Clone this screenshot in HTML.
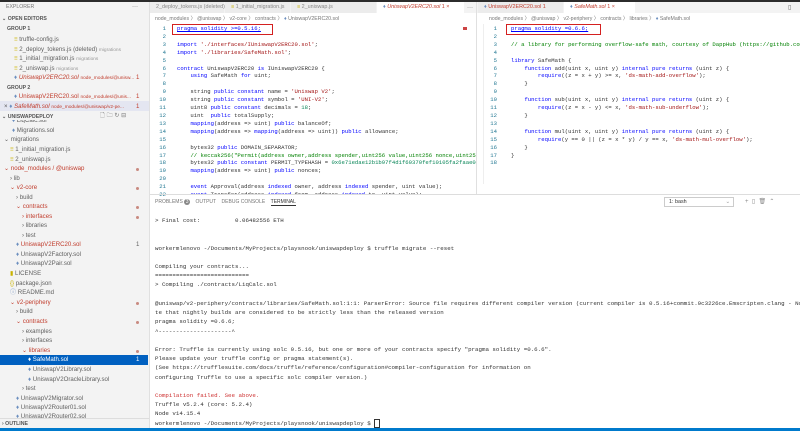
<!DOCTYPE html>
<html><head><meta charset="utf-8"><style>
*{margin:0;padding:0;box-sizing:border-box}
body{width:800px;height:431px;overflow:hidden;background:#fff;font-family:"Liberation Sans",sans-serif;position:relative;color:#616161}
.a{position:absolute;white-space:pre}
#top{left:0;top:0;width:800px;height:2px;background:#2c2c2c}
#side{left:0;top:2px;width:150px;height:426px;background:#f3f3f3}
.s{position:absolute;white-space:pre;font-size:6.1px;color:#616161;line-height:8px}
.r{color:#c13c2c}
.h{font-weight:bold;font-size:5.2px;color:#555}
.dot{position:absolute;left:136px;width:3px;height:3px;border-radius:50%;background:#c88a80}
.ic{color:#6c8fbf}
.mono{font-family:"Liberation Mono",monospace}
.code{font-size:5.6px;line-height:7.9px;color:#333}
.k{color:#0000ff}.st{color:#a31515}.c{color:#008000}.n{color:#098658}
.ln{color:#237893;text-align:right;width:14px}
.term{font-size:5.8px;line-height:9.2px;color:#333}
.tab{position:absolute;top:2px;height:11px;font-size:5.4px;line-height:11px;padding-left:6px;white-space:pre;color:#888;background:#ececec;border-right:1px solid #f3f3f3}
</style></head><body>
<div class="a" id="top"></div>
<div class="a" id="side"></div>
<!-- sidebar -->
<div class="s" style="left:6px;top:3px;font-size:5.2px;color:#777">EXPLORER</div>
<div class="s" style="left:132px;top:3px">···</div>
<div class="s h" style="left:2px;top:15px">⌄ OPEN EDITORS</div>
<div class="s h" style="left:7px;top:25px">GROUP 1</div>
<div class="s" style="left:14px;top:36px"><span style="color:#c9b200">≡</span> truffle-config.js</div>
<div class="s" style="left:14px;top:46px"><span style="color:#c9b200">≡</span> 2_deploy_tokens.js (deleted) <span style="color:#999;font-size:4.8px">migrations</span></div>
<div class="s" style="left:14px;top:55px"><span style="color:#c9b200">≡</span> 1_initial_migration.js <span style="color:#999;font-size:4.8px">migrations</span></div>
<div class="s" style="left:14px;top:65px"><span style="color:#c9b200">≡</span> 2_uniswap.js <span style="color:#999;font-size:4.8px">migrations</span></div>
<div class="s r" style="left:14px;top:74px"><span class="ic">♦</span> <i>UniswapV2ERC20.sol</i> <span style="font-size:4.8px">node_modules/@unisw...</span></div><div class="s r" style="left:136px;top:74px">1</div>
<div class="s h" style="left:7px;top:84px">GROUP 2</div>
<div class="s r" style="left:14px;top:93px"><span class="ic">♦</span> UniswapV2ERC20.sol <span style="font-size:4.8px">node_modules/@unis...</span></div><div class="s r" style="left:136px;top:93px">1</div>
<div class="a" style="left:0;top:101px;width:150px;height:10px;background:#e4e6f1"></div>
<div class="s r" style="left:4px;top:103px"><span style="color:#555">×</span> <span class="ic">♦</span> <i>SafeMath.sol</i> <span style="font-size:4.8px">node_modules/@uniswap/v2-pe...</span></div><div class="s r" style="left:136px;top:103px">1</div>
<div class="s h" style="left:2px;top:113px">⌄ UNISWAPDEPLOY</div>
<div class="s" style="left:100px;top:112px;color:#777">🗋 🗀 ↻ ⊟</div>
<div class="s" style="left:12px;top:120px;height:3px;overflow:hidden;line-height:2px"><span class="ic">♦</span> LiqCalc.sol</div>
<div class="s" style="left:12px;top:127px"><span class="ic">♦</span> Migrations.sol</div>
<div class="s" style="left:4px;top:136px">⌄ migrations</div>
<div class="s" style="left:10px;top:146px"><span style="color:#c9b200">≡</span> 1_initial_migration.js</div>
<div class="s" style="left:10px;top:156px"><span style="color:#c9b200">≡</span> 2_uniswap.js</div>
<div class="s r" style="left:4px;top:165px">⌄ node_modules / @uniswap</div><div class="dot" style="top:168px"></div>
<div class="s" style="left:10px;top:175px">› lib</div>
<div class="s r" style="left:10px;top:184px">⌄ v2-core</div><div class="dot" style="top:187px"></div>
<div class="s" style="left:16px;top:194px">› build</div>
<div class="s r" style="left:16px;top:203px">⌄ contracts</div><div class="dot" style="top:206px"></div>
<div class="s r" style="left:22px;top:213px">› interfaces</div><div class="dot" style="top:216px"></div>
<div class="s" style="left:22px;top:222px">› libraries</div>
<div class="s" style="left:22px;top:232px">› test</div>
<div class="s r" style="left:16px;top:241px"><span class="ic">♦</span> UniswapV2ERC20.sol</div><div class="s" style="left:136px;top:241px">1</div>
<div class="s" style="left:16px;top:251px"><span class="ic">♦</span> UniswapV2Factory.sol</div>
<div class="s" style="left:16px;top:260px"><span class="ic">♦</span> UniswapV2Pair.sol</div>
<div class="s" style="left:10px;top:270px"><span style="color:#c9b200">▮</span> LICENSE</div>
<div class="s" style="left:10px;top:280px"><span style="color:#c9b200">{}</span> package.json</div>
<div class="s" style="left:10px;top:289px"><span class="ic">ⓘ</span> README.md</div>
<div class="s r" style="left:10px;top:299px">⌄ v2-periphery</div><div class="dot" style="top:302px"></div>
<div class="s" style="left:16px;top:308px">› build</div>
<div class="s r" style="left:16px;top:318px">⌄ contracts</div><div class="dot" style="top:321px"></div>
<div class="s" style="left:22px;top:328px">› examples</div>
<div class="s" style="left:22px;top:337px">› interfaces</div>
<div class="s r" style="left:22px;top:347px">⌄ libraries</div><div class="dot" style="top:350px"></div>
<div class="a" style="left:0;top:355px;width:148px;height:10px;background:#0060c0"></div>
<div class="s" style="left:28px;top:356px;color:#fff"><span>♦</span> SafeMath.sol</div><div class="s" style="left:136px;top:356px;color:#fff">1</div>
<div class="s" style="left:28px;top:366px"><span class="ic">♦</span> UniswapV2Library.sol</div>
<div class="s" style="left:28px;top:376px"><span class="ic">♦</span> UniswapV2OracleLibrary.sol</div>
<div class="s" style="left:22px;top:385px">› test</div>
<div class="s" style="left:16px;top:395px"><span class="ic">♦</span> UniswapV2Migrator.sol</div>
<div class="s" style="left:16px;top:404px"><span class="ic">♦</span> UniswapV2Router01.sol</div>
<div class="s" style="left:16px;top:413px;height:5px;overflow:hidden"><span class="ic">♦</span> UniswapV2Router02.sol</div>
<div class="a" style="left:0;top:418px;width:150px;height:1px;background:#ddd"></div>
<div class="s h" style="left:2px;top:420px">› OUTLINE</div>
<div class="a" style="left:149px;top:2px;width:1px;height:426px;background:#e0e0e0"></div>

<!-- tab bars -->
<div class="a" style="left:150px;top:2px;width:650px;height:11px;background:#f3f3f3"></div>
<div class="tab" style="left:150px;width:75px">2_deploy_tokens.js (deleted)</div>
<div class="tab" style="left:225px;width:66px"><span style="color:#c9b200">≡</span> 1_initial_migration.js</div>
<div class="tab" style="left:291px;width:86px"><span style="color:#c9b200">≡</span> 2_uniswap.js</div>
<div class="tab r" style="left:377px;width:88px;background:#fff;color:#c13c2c"><span class="ic">♦</span> <i>UniswapV2ERC20.sol</i> 1 ×</div>
<div class="s" style="left:467px;top:4px">···</div>
<div class="tab r" style="left:478px;width:86px;color:#c13c2c"><span class="ic">♦</span> UniswapV2ERC20.sol 1</div>
<div class="tab r" style="left:564px;width:72px;background:#fff;color:#c13c2c"><span class="ic">♦</span> <i>SafeMath.sol</i> 1 ×</div>
<div class="s" style="left:788px;top:4px">▯</div>
<div class="a" style="left:476px;top:2px;width:1px;height:192px;background:#e0e0e0"></div>
<!-- breadcrumbs -->
<div class="s" style="left:155px;top:15px;font-size:5.2px;color:#777">node_modules 〉 @uniswap 〉 v2-core 〉 contracts 〉 <span class="ic">♦</span> UniswapV2ERC20.sol</div>
<div class="s" style="left:489px;top:15px;font-size:5.2px;color:#777">node_modules 〉 @uniswap 〉 v2-periphery 〉 contracts 〉 libraries 〉 <span class="ic">♦</span> SafeMath.sol</div>

<!-- left code -->
<div class="a mono code ln" style="left:152px;top:25px">1
2
3
4
5
6
7
8
9
10
11
12
13
14
15
16
17
18
19
20
21
22</div>
<div class="a" style="left:150px;top:24px;width:326px;height:170px;overflow:hidden">
<div class="a mono code" style="left:27px;top:1px"><u class="k">pragma solidity >=0.5.16;</u>

<span class="k">import</span> <span class="st">'./interfaces/IUniswapV2ERC20.sol'</span>;
<span class="k">import</span> <span class="st">'./libraries/SafeMath.sol'</span>;

<span class="k">contract</span> UniswapV2ERC20 <span class="k">is</span> IUniswapV2ERC20 {
    <span class="k">using</span> SafeMath <span class="k">for</span> uint;

    string <span class="k">public constant</span> name = <span class="st">'Uniswap V2'</span>;
    string <span class="k">public constant</span> symbol = <span class="st">'UNI-V2'</span>;
    uint8 <span class="k">public constant</span> decimals = <span class="n">18</span>;
    uint  <span class="k">public</span> totalSupply;
    <span class="k">mapping</span>(address => uint) <span class="k">public</span> balanceOf;
    <span class="k">mapping</span>(address => <span class="k">mapping</span>(address => uint)) <span class="k">public</span> allowance;

    bytes32 <span class="k">public</span> DOMAIN_SEPARATOR;
    <span class="c">// keccak256("Permit(address owner,address spender,uint256 value,uint256 nonce,uint256 deadline)");</span>
    bytes32 <span class="k">public constant</span> PERMIT_TYPEHASH = <span class="n">0x6e71edae12b1b97f4d1f60370fef10105fa2faae0126114a169c64845d6126c9</span>;
    <span class="k">mapping</span>(address => uint) <span class="k">public</span> nonces;

    <span class="k">event</span> Approval(address <span class="k">indexed</span> owner, address <span class="k">indexed</span> spender, uint value);
    <span class="k">event</span> Transfer(address <span class="k">indexed</span> from, address <span class="k">indexed</span> to, uint value);</div>
<div class="a" style="left:22px;top:0px;width:101px;height:11px;border:1.3px solid #d42020"></div>
</div>
<div class="a" style="left:463px;top:27px;width:4px;height:3px;background:#c44"></div>

<!-- right code -->
<div class="a mono code ln" style="left:483px;top:25px">1
2
3
4
5
6
7
8
9
10
11
12
13
14
15
16
17
18</div>
<div class="a" style="left:477px;top:24px;width:323px;height:170px;overflow:hidden">
<div class="a mono code" style="left:34px;top:1px"><u class="k">pragma solidity =0.6.6;</u>

<span class="c">// a library for performing overflow-safe math, courtesy of DappHub (https://github.com/dapphub/ds-math)</span>

<span class="k">library</span> SafeMath {
    <span class="k">function</span> add(uint x, uint y) <span class="k">internal pure returns</span> (uint z) {
        <span class="k">require</span>((z = x + y) >= x, <span class="st">'ds-math-add-overflow'</span>);
    }

    <span class="k">function</span> sub(uint x, uint y) <span class="k">internal pure returns</span> (uint z) {
        <span class="k">require</span>((z = x - y) <= x, <span class="st">'ds-math-sub-underflow'</span>);
    }

    <span class="k">function</span> mul(uint x, uint y) <span class="k">internal pure returns</span> (uint z) {
        <span class="k">require</span>(y == 0 || (z = x * y) / y == x, <span class="st">'ds-math-mul-overflow'</span>);
    }
}</div>
<div class="a" style="left:29px;top:0px;width:95px;height:11px;border:1.3px solid #d42020"></div>
</div>
<div class="a" style="left:483px;top:24px;width:1px;height:160px;background:#eee"></div>

<!-- panel -->
<div class="a" style="left:150px;top:194px;width:650px;height:1px;background:#ddd"></div>
<div class="s" style="left:155px;top:198px;font-size:5px;color:#777">PROBLEMS <span style="background:#888;color:#fff;border-radius:3px;padding:0 1.5px">3</span>    OUTPUT    DEBUG CONSOLE    <span style="color:#333;border-bottom:1px solid #333">TERMINAL</span></div>
<div class="a" style="left:664px;top:197px;width:70px;height:10px;border:1px solid #ccc;background:#fff;font-size:5.4px;line-height:8px;padding-left:4px;color:#333">1: bash<span style="position:absolute;right:3px;color:#999">⌄</span></div>
<div class="s" style="left:745px;top:198px;color:#888;font-size:6px">+  ▯  🗑  ⌃</div>
<div class="a mono term" style="left:155px;top:216px">&gt; Final cost:          0.06482556 ETH


workermlenovo -/Documents/MyProjects/playsnook/uniswapdeploy $ truffle migrate --reset
</div>
<div class="a mono term" style="left:155px;top:262px">Compiling your contracts...
===========================
&gt; Compiling ./contracts/LiqCalc.sol
</div>
<div class="a mono term" style="left:155px;top:299px">@uniswap/v2-periphery/contracts/libraries/SafeMath.sol:1:1: ParserError: Source file requires different compiler version (current compiler is 0.5.16+commit.9c3226ce.Emscripten.clang - No
te that nightly builds are considered to be strictly less than the released version
pragma solidity =0.6.6;
^---------------------^

Error: Truffle is currently using solc 0.5.16, but one or more of your contracts specify "pragma solidity =0.6.6".
Please update your truffle config or pragma statement(s).
(See https://trufflesuite.com/docs/truffle/reference/configuration#compiler-configuration for information on
configuring Truffle to use a specific solc compiler version.)

<span style="color:#cd3131">Compilation failed. See above.</span>
Truffle v5.2.4 (core: 5.2.4)
Node v14.15.4
workermlenovo -/Documents/MyProjects/playsnook/uniswapdeploy $ <span style="border:1px solid #333">&nbsp;</span></div>
<div class="a" style="left:0;top:428px;width:800px;height:3px;background:#007acc"></div>
</body></html>
